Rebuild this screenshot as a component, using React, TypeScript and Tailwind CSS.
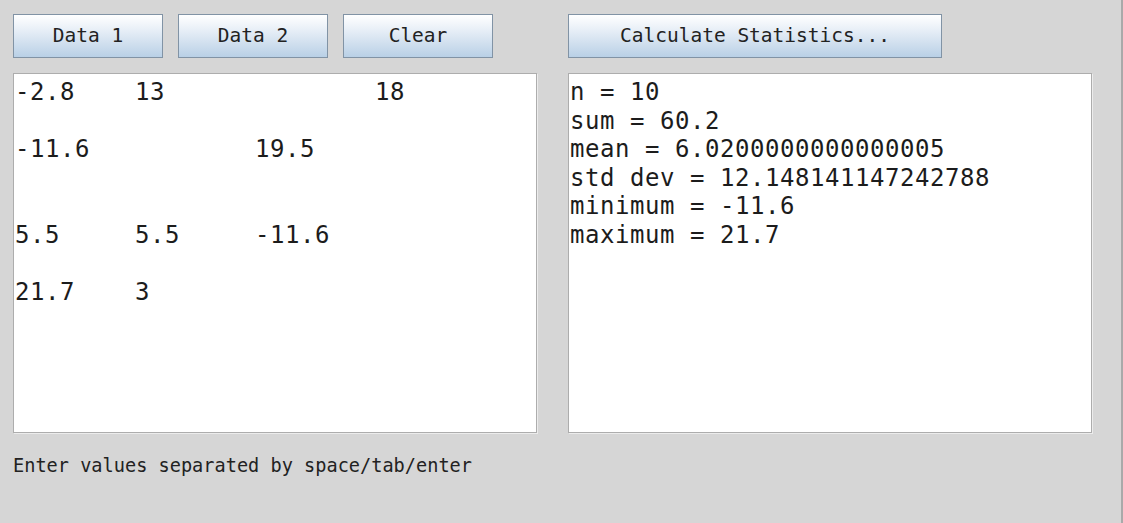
import React from "react";

const leftLines = [
  "-2.8\t13\t\t18",
  "",
  "-11.6\t\t19.5",
  "",
  "",
  "5.5\t5.5\t-11.6",
  "",
  "21.7\t3",
];

const statLines = [
  "n = 10",
  "sum = 60.2",
  "mean = 6.0200000000000005",
  "std dev = 12.148141147242788",
  "minimum = -11.6",
  "maximum = 21.7",
];

function MetalButton({ label, wide }: { label: string; wide?: boolean }) {
  return (
    <button
      className={`${wide ? "w-[374px]" : "w-[150px]"} h-[44px] flex items-center justify-center border border-[#8193a5] bg-[linear-gradient(to_bottom,#ffffff_0%,#e8eff7_35%,#b9d0e6_100%)] text-[19.5px] text-[#222] font-['DejaVu_Sans_Mono',monospace] leading-none`}
    >
      {label}
    </button>
  );
}

function TextPanel({ lines }: { lines: string[] }) {
  return (
    <div className="w-[524px] h-[360px] mt-[15px] bg-white border border-[#adadad] shadow-[1px_1px_0_#ececec] pl-[1px] pt-[4px] overflow-hidden">
      {lines.map((line, i) => (
        <div
          key={i}
          className="h-[28.5px] leading-[28.5px] whitespace-pre text-[24px] tracking-[0.55px] [tab-size:120px] text-[#1c1c1c] font-['DejaVu_Sans_Mono',monospace]"
        >
          {line}
        </div>
      ))}
    </div>
  );
}

export default function App() {
  return (
    <div className="w-[1123px] h-[523px] bg-[#d6d6d6] border-r-2 border-[#a9a9a9] pl-[13px] pt-[14px] overflow-hidden">
      <div className="flex gap-[31px]">
        {/* Data entry side */}
        <div className="flex flex-col">
          <div className="flex gap-[15px]">
            <MetalButton label="Data 1" />
            <MetalButton label="Data 2" />
            <MetalButton label="Clear" />
          </div>
          <TextPanel lines={leftLines} />
        </div>

        {/* Results side */}
        <div className="flex flex-col">
          <MetalButton label="Calculate Statistics..." wide />
          <TextPanel lines={statLines} />
        </div>
      </div>

      <div className="mt-[22px] text-[18.6px] leading-[22px] text-[#222] font-['DejaVu_Sans_Mono',monospace]">
        Enter values separated by space/tab/enter
      </div>
    </div>
  );
}
